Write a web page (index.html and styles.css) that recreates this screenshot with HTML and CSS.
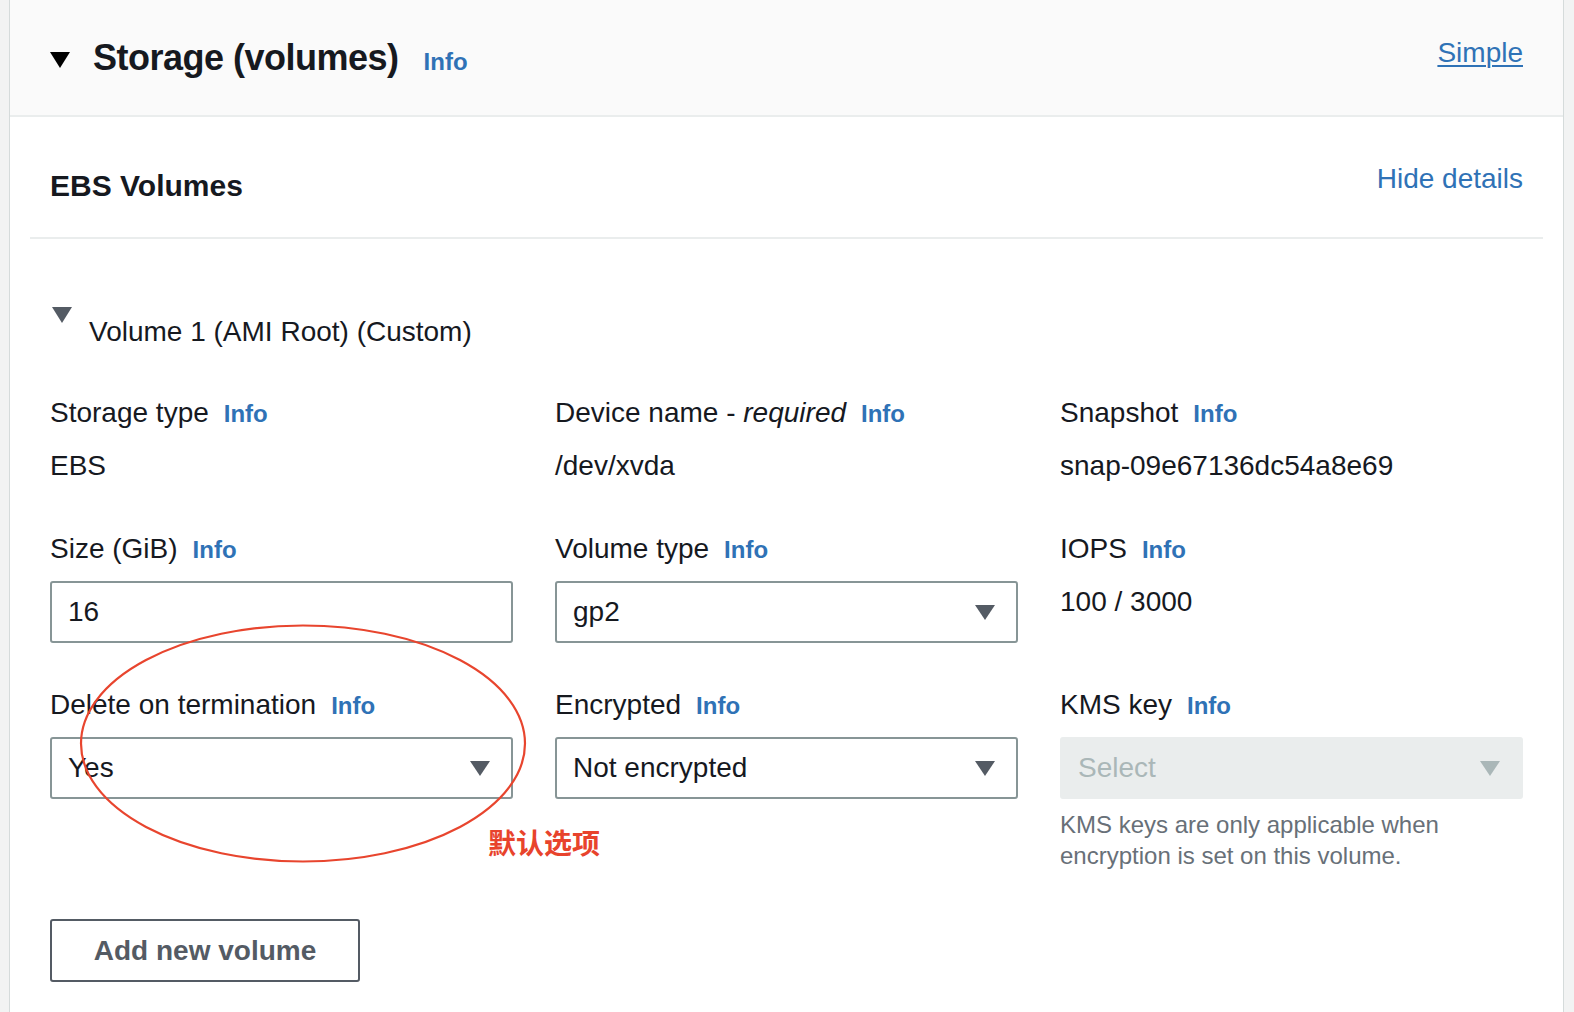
FILE: index.html
```html
<!DOCTYPE html>
<html lang="en">
<head>
<meta charset="utf-8">
<title>Storage (volumes)</title>
<link rel="stylesheet" href="styles.css">
</head>
<body>
<div class="page">
  <section class="panel">
    <header class="panel-header">
      <h2 class="panel-title">
        <svg class="caret caret-black" width="20" height="16" viewBox="0 0 20 16"><path d="M0 0H20L10 16Z"/></svg>
        <span class="title-text">Storage (volumes)</span>
        <a href="#" class="info info-lg">Info</a>
      </h2>
      <a href="#" class="link link-underline">Simple</a>
    </header>
    <div class="panel-body">
      <div class="section-head">
        <h3 class="section-title">EBS Volumes</h3>
        <a href="#" class="link">Hide details</a>
      </div>
      <div class="volume">
        <div class="volume-head">
          <svg class="caret caret-gray" width="20" height="16" viewBox="0 0 20 16"><path d="M0 0H20L10 16Z"/></svg>
          <span class="volume-title">Volume 1 (AMI Root) (Custom)</span>
        </div>
        <div class="fields">
          <div class="field">
            <div class="label">Storage type<a href="#" class="info">Info</a></div>
            <div class="value">EBS</div>
          </div>
          <div class="field">
            <div class="label">Device name - <i>required</i><a href="#" class="info">Info</a></div>
            <div class="value">/dev/xvda</div>
          </div>
          <div class="field">
            <div class="label">Snapshot<a href="#" class="info">Info</a></div>
            <div class="value">snap-09e67136dc54a8e69</div>
          </div>

          <div class="field">
            <div class="label">Size (GiB)<a href="#" class="info">Info</a></div>
            <div class="control">16</div>
          </div>
          <div class="field">
            <div class="label">Volume type<a href="#" class="info">Info</a></div>
            <div class="control">gp2<svg class="arrow" width="20" height="15" viewBox="0 0 20 15"><path d="M0 0H20L10 15Z"/></svg></div>
          </div>
          <div class="field">
            <div class="label">IOPS<a href="#" class="info">Info</a></div>
            <div class="value value-iops">100 / 3000</div>
          </div>

          <div class="field">
            <div class="label">Delete on termination<a href="#" class="info">Info</a></div>
            <div class="control">Yes<svg class="arrow" width="20" height="15" viewBox="0 0 20 15"><path d="M0 0H20L10 15Z"/></svg></div>
          </div>
          <div class="field">
            <div class="label">Encrypted<a href="#" class="info">Info</a></div>
            <div class="control">Not encrypted<svg class="arrow" width="20" height="15" viewBox="0 0 20 15"><path d="M0 0H20L10 15Z"/></svg></div>
          </div>
          <div class="field">
            <div class="label">KMS key<a href="#" class="info">Info</a></div>
            <div class="control control-disabled">Select<svg class="arrow" width="20" height="15" viewBox="0 0 20 15"><path d="M0 0H20L10 15Z"/></svg></div>
            <div class="help">KMS keys are only applicable when<br>encryption is set on this volume.</div>
          </div>
        </div>
        <button class="btn" type="button">Add new volume</button>
      </div>
    </div>
  </section>
  <svg class="annot-ellipse" width="1574" height="1012" viewBox="0 0 1574 1012"><ellipse cx="303" cy="743.5" rx="222" ry="118" fill="none" stroke="#e8452e" stroke-width="2.2"/></svg>
  <div class="annot-text">默认选项</div>
</div>
</body>
</html>
```

FILE: styles.css
```css
* { box-sizing: border-box; }
html, body { margin: 0; padding: 0; }
body {
  font-family: "Liberation Sans", Arial, sans-serif;
  color: #16191f;
  background: #f2f3f3;
}
.page {
  position: relative;
  width: 1574px;
  height: 1012px;
  overflow: hidden;
}
.panel {
  margin-left: 9px;
  width: 1555px;
  min-height: 1012px;
  background: #ffffff;
  border-left: 1px solid #d5dbdb;
  border-right: 1px solid #d5dbdb;
}
.panel-header {
  height: 117px;
  background: #fafafa;
  border-bottom: 2px solid #eaeded;
  padding: 36px 40px 0;
  display: flex;
  justify-content: space-between;
  align-items: flex-start;
}
.panel-title {
  margin: 0;
  display: flex;
  align-items: baseline;
  font-size: 36px;
  line-height: 44px;
  font-weight: 700;
}
.caret { display: block; flex: none; }
.caret-black { fill: #000000; align-self: center; margin-right: 23px; }
.caret-gray { fill: #545b64; margin-left: 2px; }
.title-text { letter-spacing: -0.5px; }
.info {
  color: #2f72b6;
  font-weight: 700;
  font-size: 24px;
  font-style: normal;
  text-decoration: none;
  margin-left: 15px;
}
.info-lg { margin-left: 25px; }
.link {
  color: #2f72b6;
  font-size: 28px;
  line-height: 34px;
  text-decoration: none;
}
.link-underline {
  text-decoration: underline;
  text-decoration-thickness: 2px;
  text-underline-offset: 3px;
}
.panel-body { padding: 0 20px; }
.section-head {
  height: 122px;
  padding: 45px 20px 0;
  border-bottom: 2px solid #eaeded;
  display: flex;
  justify-content: space-between;
  align-items: flex-start;
}
.section-title {
  margin: 6px 0 0;
  font-size: 30px;
  line-height: 36px;
  font-weight: 700;
}
.volume { padding: 68px 20px 0; }
.volume-head {
  display: flex;
  align-items: flex-start;
}
.volume-title {
  margin-left: 17px;
  margin-top: 8px;
  font-size: 28px;
  line-height: 34px;
}
.fields {
  margin-top: 47px;
  display: grid;
  grid-template-columns: repeat(3, 1fr);
  column-gap: 42px;
  row-gap: 45px;
}
.label {
  font-size: 28px;
  line-height: 34px;
  margin-bottom: 14px;
  white-space: nowrap;
}
.value {
  font-size: 28px;
  line-height: 34px;
  padding-top: 4px;
  padding-bottom: 4px;
}
.value-iops { padding-bottom: 0; }
.control {
  height: 62px;
  border: 2px solid #879596;
  border-radius: 3px;
  padding: 0 21px 0 16px;
  display: flex;
  align-items: center;
  justify-content: space-between;
  font-size: 28px;
  background: #ffffff;
}
.arrow { display: block; flex: none; fill: #545b64; }
.control-disabled {
  background: #eaeded;
  border-color: #eaeded;
  color: #aab7b8;
}
.control-disabled .arrow { fill: #aab7b8; }
.help {
  margin-top: 10px;
  font-size: 24px;
  line-height: 31px;
  color: #687078;
}
.btn {
  display: block;
  margin-top: 48px;
  width: 310px;
  height: 63px;
  padding: 0;
  border: 2px solid #545b64;
  border-radius: 3px;
  background: #ffffff;
  color: #545b64;
  font-family: "Liberation Sans", Arial, sans-serif;
  font-size: 28px;
  font-weight: 700;
  text-align: center;
}
.annot-ellipse {
  position: absolute;
  left: 0;
  top: 0;
  pointer-events: none;
}
.annot-text {
  position: absolute;
  left: 488px;
  top: 828px;
  font-family: "Noto Sans CJK SC", sans-serif;
  font-size: 28px;
  line-height: 28px;
  font-weight: 700;
  color: #e8432c;
  white-space: nowrap;
}
```
